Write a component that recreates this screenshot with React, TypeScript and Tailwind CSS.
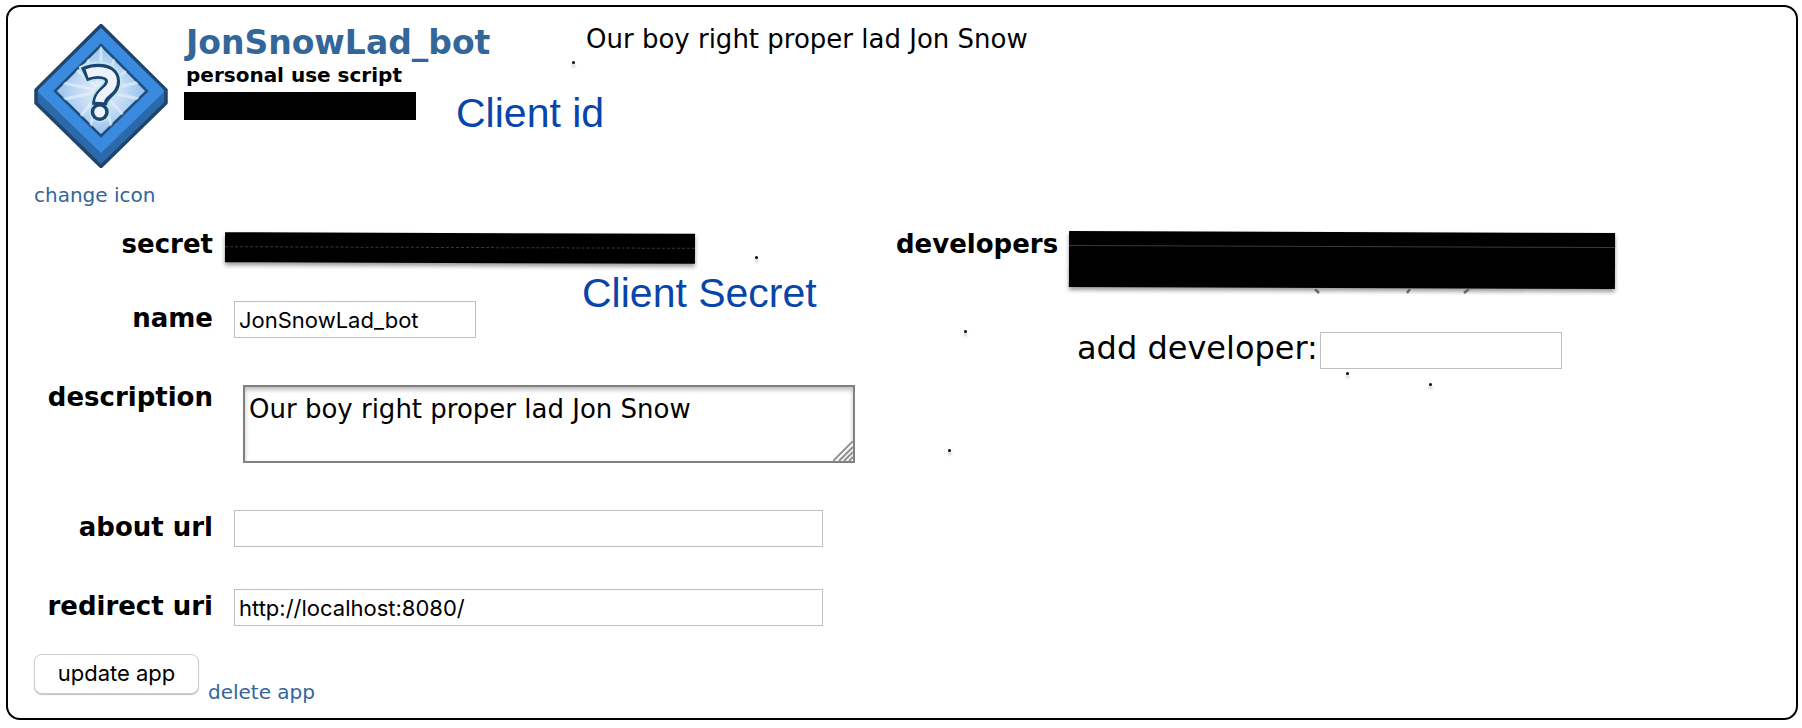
import React from "react";

const body = "font-['DejaVu_Sans',Verdana,sans-serif]";
const fieldLabel = "w-[179px] shrink-0 text-right text-[26px] leading-[34px] font-bold";
const textInput =
  "h-[37px] border border-[#c0c0c0] bg-white px-1 font-['Inter',sans-serif] text-[22px] text-black outline-none";
const note = "font-['Liberation_Sans',Arial,sans-serif] text-[41px] leading-[42px] text-[#0845ab] whitespace-nowrap";
const link = "text-[20px] leading-6 text-[#336699]";

function AppIcon() {
  return (
    <svg viewBox="0 0 134 144" className="block h-[144px] w-[134px]" aria-hidden="true">
      <defs>
        <radialGradient id="glow" cx="0.5" cy="0.5" r="0.5">
          <stop offset="0" stopColor="#e6ecf8" />
          <stop offset="0.5" stopColor="#c3dbf6" />
          <stop offset="1" stopColor="#93c0ee" />
        </radialGradient>
        <clipPath id="face">
          <path d="M67 22 L112 67 L67 112 L22 67 Z" />
        </clipPath>
      </defs>
      <path d="M67 1.5 L132 66 V79 L67 142.500 L2 79 V66 Z" fill="#2b69aa" stroke="#1f456b" strokeWidth="3.500" strokeLinejoin="round" />
      <path d="M67 4 L129 65 Q131 67 129 69 L67 129 L5 69 Q3 67 5 65 Z" fill="#3a8ae0" />
      <path d="M67 21 L113 67 L67 112 L21 67 Z" fill="url(#glow)" stroke="#1f4d7c" strokeWidth="2.500" />
      <g clipPath="url(#face)" stroke="#e9f2fc" strokeWidth="3" opacity="0.6">
        <path d="M67 67 L67 18 M67 67 L50 27 M67 67 L84 27 M67 67 L38 42 M67 67 L98 42 M67 67 L26 58 M67 67 L110 57 M67 67 L26 76 M67 67 L110 76 M67 67 L42 98 M67 67 L94 96 M67 67 L80 110 M67 67 L54 110" />
      </g>
      <g fill="none" strokeLinecap="butt" strokeLinejoin="round">
        <path d="M49 51 C60 45 78 45 78.500 57 C79 68 66 68 65.500 81" stroke="#bfe6ee" strokeWidth="19" />
        <circle cx="65.700" cy="88" r="10.500" fill="#bfe6ee" />
        <path d="M50 50.500 C60 46 78 45 78.500 57 C79 68 66 68 65.500 81" stroke="#1c4470" strokeWidth="15" />
        <circle cx="65.700" cy="88" r="9" fill="#1c4470" />
        <path d="M53 49.500 C62 46.500 78 46 78.500 57 C79 67 66 68 65.500 78" stroke="#eef2fb" strokeWidth="9" />
        <circle cx="65.700" cy="88" r="5.500" fill="#eef2fb" />
      </g>
    </svg>
  );
}

function ResizeGrip() {
  return (
    <svg viewBox="0 0 20 20" className="pointer-events-none absolute right-0.5 bottom-0.5 h-5 w-5" aria-hidden="true">
      <path d="M0 20 L20 0 V20 Z" fill="#f4f4f4" />
      <path d="M0 20 L20 0 M6 20 L20 6 M11 20 L20 11 M16 20 L20 16" stroke="#8c8c8c" strokeWidth="1.800" />
    </svg>
  );
}

const specks = [
  "left-[572px] top-[61px]",
  "left-[755px] top-[256px]",
  "left-[964px] top-[330px]",
  "left-[948px] top-[449px]",
  "left-[1346px] top-[372px]",
  "left-[1429px] top-[383px]",
];

export default function App() {
  return (
    <main className={`${body} relative bg-white pt-[5px] pr-1 pb-2 pl-1.5 text-black`}>
      <section className="rounded-[14px] border-2 border-black px-[26px] pt-[17px] pb-3.5">
        <header className="flex">
          <div className="w-[150px] shrink-0">
            <AppIcon />
            <a href="#icon" className={`${link} mt-[15px] block`}>change icon</a>
          </div>
          <div className="w-[402px] shrink-0 whitespace-nowrap">
            <h1 className="pl-0.5 text-[33px] leading-[38px] font-bold">
              <a href="#app" className="text-[#336699]">JonSnowLad_bot</a>
            </h1>
            <p className="mt-px pl-0.5 text-[20px] leading-6 font-bold">personal use script</p>
            <div className="mt-[5px] flex h-7 items-start gap-10">
              <div className="h-7 w-[232px] shrink-0 bg-black" />
              <span className={note}>Client id</span>
            </div>
          </div>
          <p className="text-[26px] leading-[30px]">Our boy right proper lad Jon Snow</p>
        </header>

        <form className="mt-5" onSubmit={(e) => e.preventDefault()}>
          <div className="flex items-start gap-10">
            <div className="flex w-[822px] shrink-0 flex-col gap-[42px]">
              <div className="relative flex h-8 items-start gap-3">
                <span className={fieldLabel}>secret</span>
                <div className="mt-1.5 h-[30px] w-[470px] rotate-[0.2deg] bg-black pt-3.5 shadow-[0_3px_4px_rgba(0,0,0,0.4)]">
                  <div className="border-t border-dashed border-[#3a3a3a]" />
                </div>
                <span className={`${note} absolute top-[45px] left-[548px]`}>Client Secret</span>
              </div>
              <div className="flex items-start gap-[21px]">
                <label htmlFor="name" className={fieldLabel}>name</label>
                <input id="name" type="text" defaultValue="JonSnowLad_bot" className={`${textInput} w-[242px]`} />
              </div>
              <div className="flex items-start gap-[30px]">
                <label htmlFor="description" className={fieldLabel}>description</label>
                <div className="relative my-[5px] h-[78px] w-[612px]">
                  <textarea
                    id="description"
                    defaultValue="Our boy right proper lad Jon Snow"
                    className="block h-full w-full resize-none border-2 border-[#808080] bg-white px-1 py-1.5 text-[26px] leading-8 shadow-[inset_0_3px_4px_rgba(0,0,0,0.25)] outline-none"
                  />
                  <ResizeGrip />
                </div>
              </div>
              <div className="flex items-start gap-[21px]">
                <label htmlFor="about" className={fieldLabel}>about url</label>
                <input id="about" type="text" className={`${textInput} w-[589px]`} />
              </div>
              <div className="flex items-start gap-[21px]">
                <label htmlFor="redirect" className={fieldLabel}>redirect uri</label>
                <input id="redirect" type="text" defaultValue="http://localhost:8080/" className={`${textInput} w-[589px]`} />
              </div>
            </div>

            <div className="flex items-start gap-[11px]">
              <span className="w-[162px] shrink-0 text-right text-[26px] leading-[34px] font-bold">developers</span>
              <div>
                <div className="relative mt-[5px]">
                  <div className="relative h-14 w-[546px] rotate-[0.2deg] bg-black pt-3.5 shadow-[0_3px_4px_rgba(0,0,0,0.4)]">
                    <div className="border-t border-[#3a3a3a]" />
                  </div>
                  <svg viewBox="0 0 170 6" className="absolute top-[57px] left-[244px] h-1.5 w-[170px]" aria-hidden="true">
                    <path d="M2 0 L6 4 M97 0 L94 4 M156 0 L151 4" stroke="#666" strokeWidth="2.500" />
                  </svg>
                </div>
                <div className="mt-11 ml-2 flex items-start gap-1">
                  <label htmlFor="developer" className="w-[239px] text-[32px] leading-8 whitespace-nowrap">add developer:</label>
                  <input id="developer" type="text" className={`${textInput} w-[242px]`} />
                </div>
              </div>
            </div>
          </div>

          <div className="mt-7 flex items-start gap-[9px]">
            <button
              type="submit"
              className="h-10 w-[165px] rounded-lg border border-[#cfcfcf] bg-white pb-0.5 font-['Inter',sans-serif] text-[22px] shadow-[0_1px_1px_rgba(0,0,0,0.25)]"
            >
              update app
            </button>
            <a href="#delete" className={`${link} mt-[26px]`}>delete app</a>
          </div>
        </form>
      </section>

      {specks.map((place) => (
        <span key={place} className={`${place} absolute size-[3px] rounded-full bg-black shadow-[0_3px_3px_rgba(0,0,0,0.3)]`} />
      ))}
    </main>
  );
}
